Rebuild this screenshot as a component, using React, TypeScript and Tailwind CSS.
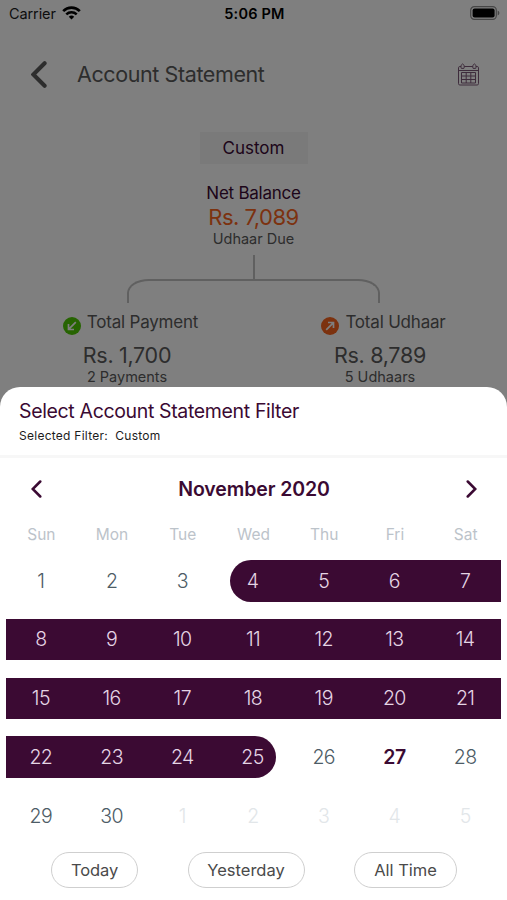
import React from 'react';

const WEEKDAYS = ['Sun', 'Mon', 'Tue', 'Wed', 'Thu', 'Fri', 'Sat'];

const RANGE_START = 4;
const RANGE_END = 25;
const TODAY = 27;
const DAYS_IN_MONTH = 30;

const WEEKS = [0, 1, 2, 3, 4].map((week) => [1, 2, 3, 4, 5, 6, 7].map((day) => week * 7 + day));

const StatusBar: React.FC = () => (
  <div className="grid grid-cols-3 items-center h-7 pl-[9px] pr-[7px] text-[14.5px] text-black">
    <div className="flex items-center gap-[6px]">
      <span className="tracking-[-0.1px] text-[#1c1c1c]">Carrier</span>
      <svg width="19" height="14" viewBox="0 0 19 14" fill="none" stroke="black" className="mb-[2px]">
        <path d="M1.2 5.1a11.8 11.8 0 0 1 16.6 0" strokeWidth="2.7" />
        <path d="M4.3 8.3a7.4 7.4 0 0 1 10.4 0" strokeWidth="2.5" />
        <path d="M9.5 13.5 6.8 10.8a3.9 3.9 0 0 1 5.4 0z" fill="black" stroke="none" />
      </svg>
    </div>
    <span className="text-center font-semibold tracking-[0.2px]">5:06 PM</span>
    <svg width="30" height="14" viewBox="0 0 30 14" className="justify-self-end mb-[2px]">
      <rect x="0.7" y="0.7" width="25.6" height="12.6" rx="3.6" fill="none" stroke="#8c8c8c" strokeWidth="1.2" />
      <rect x="2.6" y="2.4" width="22" height="9.2" rx="2" fill="black" />
      <path d="M27.7 4.5v5c1-.4 1.7-1.3 1.7-2.5s-.7-2.1-1.7-2.5z" fill="#8c8c8c" />
    </svg>
  </div>
);

const CalendarIcon: React.FC = () => (
  <svg width="21" height="23" viewBox="0 0 21 23" fill="none" stroke="#7c5878" strokeWidth="1">
    <path d="M3 3.5H1.8c-.8 0-1.3.5-1.3 1.3v15.9c0 .8.5 1.3 1.3 1.3h17.4c.8 0 1.3-.5 1.3-1.3V4.8c0-.8-.5-1.3-1.3-1.3H18" />
    <path d="M6.2 3.5h8.6M.5 7.5h20" />
    <path d="M3.3 5.4c-.8-1.6-.3-3.9 1.3-4.5 1.6.6 2.1 2.9 1.3 4.5zM15.1 5.4c-.8-1.6-.3-3.9 1.3-4.5 1.6.6 2.1 2.9 1.3 4.5z" />
    <path d="M3.5 9.5h14v10.5h-14zM8.2 9.5V20M12.8 9.5V20M3.5 13h14M3.5 16.5h14" />
  </svg>
);

const Chevron: React.FC<{ className: string; flip?: boolean; strokeWidth: number }> = ({ className, flip, strokeWidth }) => (
  <svg viewBox="0 0 14 24" fill="none" stroke="currentColor" strokeWidth={strokeWidth} strokeLinecap="round" strokeLinejoin="miter" className={className}>
    <path d={flip ? 'M2 2l10 10L2 22' : 'M12 2L2 12l10 10'} />
  </svg>
);

interface TotalProps {
  label: string;
  amount: string;
  count: string;
  incoming?: boolean;
}

const Total: React.FC<TotalProps> = ({ label, amount, count, incoming }) => (
  <div className="flex flex-col items-center w-[253px] text-[#5a5a5a]">
    <div className="flex items-center gap-[6px] h-7 pl-[7px]">
      <svg width="18" height="18" viewBox="0 0 18 18" className="mt-[7px]">
        <circle cx="9" cy="9" r="9" fill={incoming ? '#4ec804' : '#f8641e'} />
        <path
          d={incoming ? 'M12.8 5.2 5.8 12.2M5.5 7v5.5H11' : 'M5.2 12.8l7-7M7 5.5h5.5V11'}
          fill="none"
          stroke="white"
          strokeWidth="1.7"
        />
      </svg>
      <span className="pt-px text-[17px] tracking-[-0.2px]">{label}</span>
    </div>
    <div className="text-[21.5px] leading-[26px] mt-[6px] tracking-[-0.3px]">{amount}</div>
    <div className="text-[14.5px] leading-[18px]">{count}</div>
  </div>
);

const StatementScreen: React.FC = () => (
  <div className="flex flex-col h-full bg-white">
    <StatusBar />
    <div className="flex items-center h-[92px] pl-[31px] pr-[28px] text-[#5a5a5a]">
      <Chevron className="w-4 h-[27px]" strokeWidth={3.6} />
      <h1 className="ml-[30px] text-[21.5px] tracking-[-0.4px]">Account Statement</h1>
      <div className="ml-auto">
        <CalendarIcon />
      </div>
    </div>

    <div className="flex flex-col items-center">
      <div className="mt-[12px] w-[108px] h-8 pt-px bg-[#f4f4f4] flex items-center justify-center text-[17px] text-[#3b0a35]">Custom</div>
      <div className="mt-[18px] text-[17px] leading-[22px] tracking-[-0.25px] text-[#3b0a35]">Net Balance</div>
      <div className="text-[22px] leading-[26px] tracking-[-0.5px] text-[#f8641e]">Rs. 7,089</div>
      <div className="text-[14.5px] leading-[18px] text-[#5a5a5a]">Udhaar Due</div>
      <div className="mt-[7px] ml-px w-[2px] h-6 bg-[#c0c0c0]" />
      <div className="w-[253px] h-6 border-2 border-b-0 border-[#c0c0c0] rounded-t-[22px_14px]" />
    </div>

    <div className="flex justify-center mt-[5px]">
      <Total label="Total Payment" amount="Rs. 1,700" count="2 Payments" incoming />
      <Total label="Total Udhaar" amount="Rs. 8,789" count="5 Udhaars" />
    </div>
  </div>
);

const DayCell: React.FC<{ day: number }> = ({ day }) => {
  const outside = day > DAYS_IN_MONTH;
  const inRange = day >= RANGE_START && day <= RANGE_END;

  let shape = 'w-full pr-px';
  if (day === RANGE_START) shape = 'ml-3 pr-[14px] rounded-l-full';
  if (day === RANGE_END) shape = 'mr-[13px] pl-[11px] rounded-r-full';

  let color = 'text-[#4d5c66] font-light';
  if (inRange) color = 'bg-[#3b0a33] text-[#e5d5e5] font-light';
  if (outside) color = 'text-[#e2e6e9] font-light';
  if (day === TODAY) color = 'text-[#3b0a33] font-semibold';

  return (
    <button className={`flex items-center justify-center h-[41.5px] pt-px text-[19.5px] tracking-[-0.6px] ${shape} ${color}`}>
      {outside ? day - DAYS_IN_MONTH : day}
    </button>
  );
};

const FilterSheet: React.FC = () => (
  <div className="flex flex-col h-[513px] bg-white rounded-t-[20px] overflow-hidden">
    <div className="h-[71px] px-[19px] pt-[11px] border-b-[3px] border-[#f7f7f7]">
      <h2 className="text-[19.5px] leading-[26px] tracking-[-0.35px] text-[#3b0a33]">Select Account Statement Filter</h2>
      <p className="mt-[4px] text-[12px] leading-4 tracking-[0.26px] text-[#1c1c1c] whitespace-pre">{'Selected Filter:  Custom'}</p>
    </div>

    {/* Month navigation */}
    <div className="flex items-center justify-between h-[62px] pl-[31px] pr-[30px] text-[#3b0a33]">
      <Chevron className="w-[11px] h-[18px]" strokeWidth={3.4} />
      <span className="pt-[2px] text-[19.5px] font-semibold tracking-[-0.1px]">November 2020</span>
      <Chevron className="w-[11px] h-[18px]" strokeWidth={3.4} flip />
    </div>

    <div className="px-[6px]">
      <div className="grid grid-cols-7 h-7 pt-[2px] items-center text-center text-[15.5px] text-[#bcc3ca]">
        {WEEKDAYS.map((name) => (
          <span key={name}>{name}</span>
        ))}
      </div>
      <div className="mt-3 flex flex-col gap-[17.3px]">
        {WEEKS.map((week) => (
          <div key={week[0]} className="grid grid-cols-7">
            {week.map((day) => (
              <DayCell key={day} day={day} />
            ))}
          </div>
        ))}
      </div>
    </div>

    {/* Quick filters */}
    <div className="mt-[15px] flex justify-between pl-[51px] pr-[50px] text-[16.5px] text-[#4a4a4a]">
      <button className="w-[87px] h-9 pt-px rounded-full border border-[#cfcfcf] tracking-[-0.1px]">Today</button>
      <button className="w-[117px] h-9 pt-px rounded-full border border-[#cfcfcf]">Yesterday</button>
      <button className="w-[103px] h-9 pt-px rounded-full border border-[#cfcfcf]">All Time</button>
    </div>
  </div>
);

export default function App() {
  return (
    <div className="relative w-[507px] h-[900px] overflow-hidden font-['Inter',sans-serif]">
      <StatementScreen />
      <div className="absolute inset-0 flex flex-col justify-end bg-black/50">
        <FilterSheet />
      </div>
    </div>
  );
}
